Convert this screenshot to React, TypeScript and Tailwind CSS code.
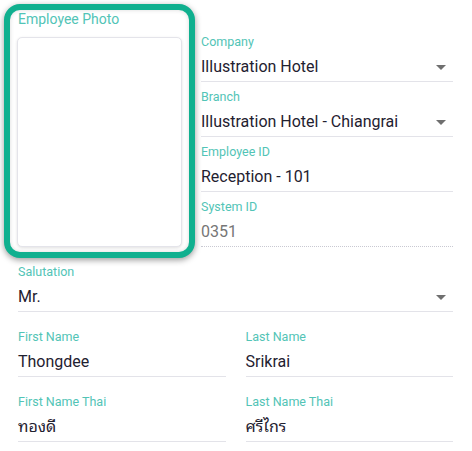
import React from "react";

type Field = { label: string; value: string; select?: boolean; disabled?: boolean };

const rightFields: Field[] = [
  { label: "Company", value: "Illustration Hotel", select: true },
  { label: "Branch", value: "Illustration Hotel - Chiangrai", select: true },
  { label: "Employee ID", value: "Reception - 101" },
  { label: "System ID", value: "0351", disabled: true },
];

function FormField({ label, value, select, disabled }: Field) {
  return (
    <div className="flex flex-col">
      <label className="text-[12.5px] leading-[16px] text-[#52c4b6]">{label}</label>
      <div
        className={`mt-[5px] pb-[2px] flex items-center justify-between border-b ${
          disabled ? "border-dotted border-[#c9c9d2]" : "border-[#e3e3e9]"
        }`}
      >
        <span className={`text-[16px] leading-[24px] ${disabled ? "text-[#767676]" : "text-[#1f2130]"}`}>{value}</span>
        {select && (
          <span className="mr-[7px] w-0 h-0 border-x-[5px] border-x-transparent border-t-[5px] border-t-[#6f6f6f]" />
        )}
      </div>
    </div>
  );
}

export default function App() {
  return (
    <div
      className="w-[472px] h-[451px] bg-white overflow-hidden pt-[4px]"
      style={{ fontFamily: "Roboto, 'Noto Sans', 'Noto Sans Thai Looped', Loma, Garuda, 'Noto Sans Thai', 'DejaVu Sans', sans-serif" }}
    >
      {/* TOP: photo + company fields */}
      <div className="flex items-start">
        <div className="ml-[4px] w-[191px] h-[254px] border-[6px] border-[#10b08f] rounded-[16px] px-[7px] shadow-[0_2px_6px_rgba(0,0,0,0.4),inset_0_0_4px_rgba(0,0,0,0.15)] bg-white flex flex-col">
          <span className="pl-px text-[14px] leading-[19px] text-[#52c4b6]">Employee Photo</span>
          <div className="mt-[8px] h-[210px] rounded-[5px] bg-white border border-[#e4e4ea] shadow-[0_1px_3px_rgba(0,0,0,0.12)]" />
        </div>
        <div className="ml-[6px] w-[252px] pt-[30px] flex flex-col gap-[7px]">
          {rightFields.map(f => (
            <FormField key={f.label} {...f} />
          ))}
        </div>
      </div>

      {/* BOTTOM: name fields */}
      <div className="mt-[6px] pl-[18px] pr-[19px]">
        <FormField label="Salutation" value="Mr." select />
        <div className="grid grid-cols-2 gap-x-[20px] gap-y-[17px] mt-[17px]">
          <FormField label="First Name" value="Thongdee" />
          <FormField label="Last Name" value="Srikrai" />
          <FormField label="First Name Thai" value="ทองดี" />
          <FormField label="Last Name Thai" value="ศรีไกร" />
        </div>
      </div>
    </div>
  );
}
